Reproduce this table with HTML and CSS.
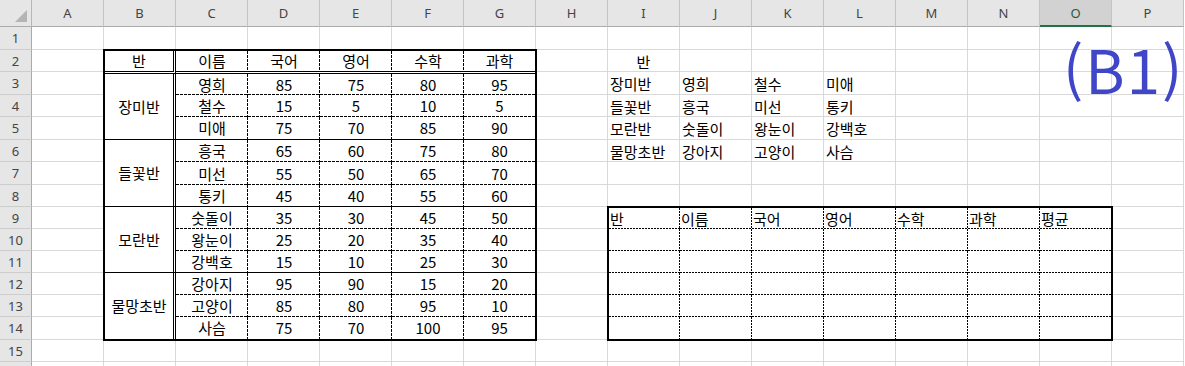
FILE: index.html
```html
<!DOCTYPE html>
<html lang="ko">
<head>
<meta charset="utf-8">
<title>Sheet1</title>
<link rel="stylesheet" href="styles.css">
</head>
<body>
<div class="sheet">
  <div class="corner"><span class="tri"></span></div>
  <div class="ch">A</div><div class="ch">B</div><div class="ch">C</div><div class="ch">D</div>
  <div class="ch">E</div><div class="ch">F</div><div class="ch">G</div><div class="ch">H</div>
  <div class="ch">I</div><div class="ch">J</div><div class="ch">K</div><div class="ch">L</div>
  <div class="ch">M</div><div class="ch">N</div><div class="ch sel">O</div><div class="ch">P</div>

  <!-- row 1 -->
  <div class="rh">1</div>
  <div class="c"></div><div class="c"></div><div class="c"></div><div class="c"></div>
  <div class="c"></div><div class="c"></div><div class="c"></div><div class="c"></div>
  <div class="c"></div><div class="c"></div><div class="c"></div><div class="c"></div>
  <div class="c"></div><div class="c"></div><div class="c"></div><div class="c"></div>

  <!-- row 2 -->
  <div class="rh">2</div>
  <div class="c"></div>
  <div class="c"></div>
  <div class="c mid">반</div>
  <div class="c"></div><div class="c"></div><div class="c"></div><div class="c"></div>
  <div class="c"></div><div class="c"></div><div class="c"></div>

  <!-- row 3 -->
  <div class="rh">3</div>
  <div class="c"></div>
  <div class="c"></div>
  <div class="c txt">장미반</div><div class="c txt">영희</div><div class="c txt">철수</div><div class="c txt">미애</div>
  <div class="c"></div><div class="c"></div><div class="c"></div><div class="c"></div>

  <!-- row 4 -->
  <div class="rh">4</div>
  <div class="c"></div>
  <div class="c"></div>
  <div class="c txt">들꽃반</div><div class="c txt">흥국</div><div class="c txt">미선</div><div class="c txt">통키</div>
  <div class="c"></div><div class="c"></div><div class="c"></div><div class="c"></div>

  <!-- row 5 -->
  <div class="rh">5</div>
  <div class="c"></div>
  <div class="c"></div>
  <div class="c txt">모란반</div><div class="c txt">숫돌이</div><div class="c txt">왕눈이</div><div class="c txt">강백호</div>
  <div class="c"></div><div class="c"></div><div class="c"></div><div class="c"></div>

  <!-- row 6 -->
  <div class="rh">6</div>
  <div class="c"></div>
  <div class="c"></div>
  <div class="c txt">물망초반</div><div class="c txt">강아지</div><div class="c txt">고양이</div><div class="c txt">사슴</div>
  <div class="c"></div><div class="c"></div><div class="c"></div><div class="c"></div>

  <!-- row 7 -->
  <div class="rh">7</div>
  <div class="c"></div>
  <div class="c"></div>
  <div class="c"></div><div class="c"></div><div class="c"></div><div class="c"></div>
  <div class="c"></div><div class="c"></div><div class="c"></div><div class="c"></div>

  <!-- row 8 -->
  <div class="rh">8</div>
  <div class="c"></div>
  <div class="c"></div>
  <div class="c"></div><div class="c"></div><div class="c"></div><div class="c"></div>
  <div class="c"></div><div class="c"></div><div class="c"></div><div class="c"></div>

  <!-- rows 9-14 -->
  <div class="rh">9</div><div class="c"></div><div class="c"></div><div class="c"></div>
  <div class="rh">10</div><div class="c"></div><div class="c"></div><div class="c"></div>
  <div class="rh">11</div><div class="c"></div><div class="c"></div><div class="c"></div>
  <div class="rh">12</div><div class="c"></div><div class="c"></div><div class="c"></div>
  <div class="rh">13</div><div class="c"></div><div class="c"></div><div class="c"></div>
  <div class="rh">14</div><div class="c"></div><div class="c"></div><div class="c"></div>

  <!-- row 15 -->
  <div class="rh">15</div>
  <div class="c"></div><div class="c"></div><div class="c"></div><div class="c"></div>
  <div class="c"></div><div class="c"></div><div class="c"></div><div class="c"></div>
  <div class="c"></div><div class="c"></div><div class="c"></div><div class="c"></div>
  <div class="c"></div><div class="c"></div><div class="c"></div><div class="c"></div>

  <!-- row 16 (only its top edge is visible) -->
  <div class="rh"></div>
  <div class="c"></div><div class="c"></div><div class="c"></div><div class="c"></div>
  <div class="c"></div><div class="c"></div><div class="c"></div><div class="c"></div>
  <div class="c"></div><div class="c"></div><div class="c"></div><div class="c"></div>
  <div class="c"></div><div class="c"></div><div class="c"></div><div class="c"></div>

  <!-- score table B2:G14 -->
  <div class="t1">
    <div class="t hd dbl">반</div>
    <div class="t hd dr">이름</div>
    <div class="t hd dr">국어</div>
    <div class="t hd dr">영어</div>
    <div class="t hd dr">수학</div>
    <div class="t hd">과학</div>

    <div class="t grp dbl s">장미반</div>
    <div class="t drb">영희</div><div class="t drb">85</div><div class="t drb">75</div><div class="t drb">80</div><div class="t db">95</div>
    <div class="t drb">철수</div><div class="t drb">15</div><div class="t drb">5</div><div class="t drb">10</div><div class="t db">5</div>
    <div class="t dr s">미애</div><div class="t dr s">75</div><div class="t dr s">70</div><div class="t dr s">85</div><div class="t s">90</div>

    <div class="t grp dbl s">들꽃반</div>
    <div class="t drb">흥국</div><div class="t drb">65</div><div class="t drb">60</div><div class="t drb">75</div><div class="t db">80</div>
    <div class="t drb">미선</div><div class="t drb">55</div><div class="t drb">50</div><div class="t drb">65</div><div class="t db">70</div>
    <div class="t dr s">통키</div><div class="t dr s">45</div><div class="t dr s">40</div><div class="t dr s">55</div><div class="t s">60</div>

    <div class="t grp dbl s">모란반</div>
    <div class="t drb">숫돌이</div><div class="t drb">35</div><div class="t drb">30</div><div class="t drb">45</div><div class="t db">50</div>
    <div class="t drb">왕눈이</div><div class="t drb">25</div><div class="t drb">20</div><div class="t drb">35</div><div class="t db">40</div>
    <div class="t dr s">강백호</div><div class="t dr s">15</div><div class="t dr s">10</div><div class="t dr s">25</div><div class="t s">30</div>

    <div class="t grp dbl">물망초반</div>
    <div class="t drb">강아지</div><div class="t drb">95</div><div class="t drb">90</div><div class="t drb">15</div><div class="t db">20</div>
    <div class="t drb">고양이</div><div class="t drb">85</div><div class="t drb">80</div><div class="t drb">95</div><div class="t db">10</div>
    <div class="t dr">사슴</div><div class="t dr">75</div><div class="t dr">70</div><div class="t dr">100</div><div class="t">95</div>
  </div>

  <!-- result table I9:O14 -->
  <div class="t2">
    <div class="u prb">반</div><div class="u prb">이름</div><div class="u prb">국어</div><div class="u prb">영어</div><div class="u prb">수학</div><div class="u prb">과학</div><div class="u pb">평균</div>
    <div class="u prb"></div><div class="u prb"></div><div class="u prb"></div><div class="u prb"></div><div class="u prb"></div><div class="u prb"></div><div class="u pb"></div>
    <div class="u prb"></div><div class="u prb"></div><div class="u prb"></div><div class="u prb"></div><div class="u prb"></div><div class="u prb"></div><div class="u pb"></div>
    <div class="u prb"></div><div class="u prb"></div><div class="u prb"></div><div class="u prb"></div><div class="u prb"></div><div class="u prb"></div><div class="u pb"></div>
    <div class="u prb"></div><div class="u prb"></div><div class="u prb"></div><div class="u prb"></div><div class="u prb"></div><div class="u prb"></div><div class="u pb"></div>
    <div class="u pr"></div><div class="u pr"></div><div class="u pr"></div><div class="u pr"></div><div class="u pr"></div><div class="u pr"></div><div class="u"></div>
  </div>

  <div class="label">(B1)</div>
</div>
</body>
</html>
```

FILE: styles.css
```css
* {
  box-sizing: border-box;
  margin: 0;
  padding: 0;
}

html, body {
  background: #ffffff;
}

body {
  width: 1185px;
  height: 366px;
  overflow: hidden;
  font-family: "Noto Sans CJK KR", "Noto Sans", sans-serif;
  color: #000;
}

.sheet {
  position: relative;
  display: grid;
  grid-template-columns: 32px repeat(16, 72px);
  grid-template-rows: 27px 23px 22px 23px 22px 23px 22px 23px 22px 22px 22px 22px 22px 22px 23px 22px 22px;
  width: 1185px;
}

/* headers */
.corner {
  background: #e6e6e6;
  border-right: 1px solid #b7b7b7;
  border-bottom: 1px solid #ababab;
  display: flex;
  justify-content: flex-end;
  align-items: flex-end;
  padding: 0 4px 4px 0;
}

.tri {
  width: 0;
  height: 0;
  border-left: 12px solid transparent;
  border-bottom: 12px solid #b4b4b4;
}

.ch {
  background: #e6e6e6;
  border-right: 1px solid #c4c4c4;
  border-bottom: 1px solid #ababab;
  display: flex;
  align-items: center;
  justify-content: center;
  font-family: "Noto Sans", "Liberation Sans", sans-serif;
  font-size: 13px;
  color: #444;
}

.ch.sel {
  background: #d2d2d2;
  color: #1e5e3a;
  border-bottom: 2px solid #217346;
}

.rh {
  grid-column: 1;
  background: #e6e6e6;
  border-right: 1px solid #ababab;
  border-bottom: 1px solid #cdcdcd;
  display: flex;
  align-items: center;
  justify-content: center;
  font-family: "Noto Sans", "Liberation Sans", sans-serif;
  font-size: 13px;
  color: #444;
}

/* plain cells */
.c {
  border-right: 1px solid #d9d9d9;
  border-bottom: 1px solid #d9d9d9;
  display: flex;
  align-items: center;
  font-size: 15px;
  line-height: 20px;
  white-space: nowrap;
}

.c.txt {
  padding: 2px 0 0 2px;
}

.c.mid {
  justify-content: center;
  padding-top: 2px;
}

/* tables */
.t1, .t2 {
  margin: -1px;
  border: 2px solid #000;
  background: #fff;
  display: grid;
  z-index: 1;
}

.t1 {
  grid-column: 3 / 9;
  grid-row: 3 / 16;
  grid-template-columns: 71px 72px 72px 72px 72px 71px;
  grid-template-rows: 23px 21px 22px 23px 22px 23px 22px 22px 22px 22px 22px 22px 22px;
}

.t2 {
  grid-column: 10 / 17;
  grid-row: 10 / 16;
  grid-template-columns: 71px 72px 72px 72px 72px 72px 71px;
  grid-template-rows: 21px 22px 22px 22px 22px 22px;
}

.t {
  display: flex;
  align-items: center;
  justify-content: center;
  font-size: 15px;
  line-height: 20px;
  white-space: nowrap;
}

.u {
  display: flex;
  align-items: center;
  padding-left: 1px;
  font-size: 15px;
  line-height: 20px;
  white-space: nowrap;
}

.hd {
  border-bottom: 3px double #000;
}

.dbl {
  border-right: 3px double #000;
}

.grp {
  grid-row: span 3;
}

.s {
  border-bottom: 1px solid #000;
}

/* dashed lines (table 1) */
.dr {
  background: repeating-linear-gradient(to bottom, #000 0 3px, transparent 3px 4px) right top / 1px 100% no-repeat;
}

.db {
  background: repeating-linear-gradient(to right, #000 0 3px, transparent 3px 4px) left bottom / 100% 1px no-repeat;
}

.drb {
  background:
    repeating-linear-gradient(to bottom, #000 0 3px, transparent 3px 4px) right top / 1px 100% no-repeat,
    repeating-linear-gradient(to right, #000 0 3px, transparent 3px 4px) left bottom / 100% 1px no-repeat;
}

/* dotted lines (table 2) */
.pr {
  background: repeating-linear-gradient(to bottom, #000 0 2px, transparent 2px 3px) right top / 1px 100% no-repeat;
}

.pb {
  background: repeating-linear-gradient(to right, #000 0 2px, transparent 2px 3px) left bottom / 100% 1px no-repeat;
}

.prb {
  background:
    repeating-linear-gradient(to bottom, #000 0 2px, transparent 2px 3px) right top / 1px 100% no-repeat,
    repeating-linear-gradient(to right, #000 0 2px, transparent 2px 3px) left bottom / 100% 1px no-repeat;
}

/* text box */
.label {
  position: absolute;
  left: 1063px;
  top: 38px;
  font-family: "Noto Sans CJK KR", "Noto Sans", sans-serif;
  font-weight: 400;
  font-size: 60px;
  line-height: 60px;
  letter-spacing: 2px;
  color: #3f46c8;
  z-index: 2;
}
```
